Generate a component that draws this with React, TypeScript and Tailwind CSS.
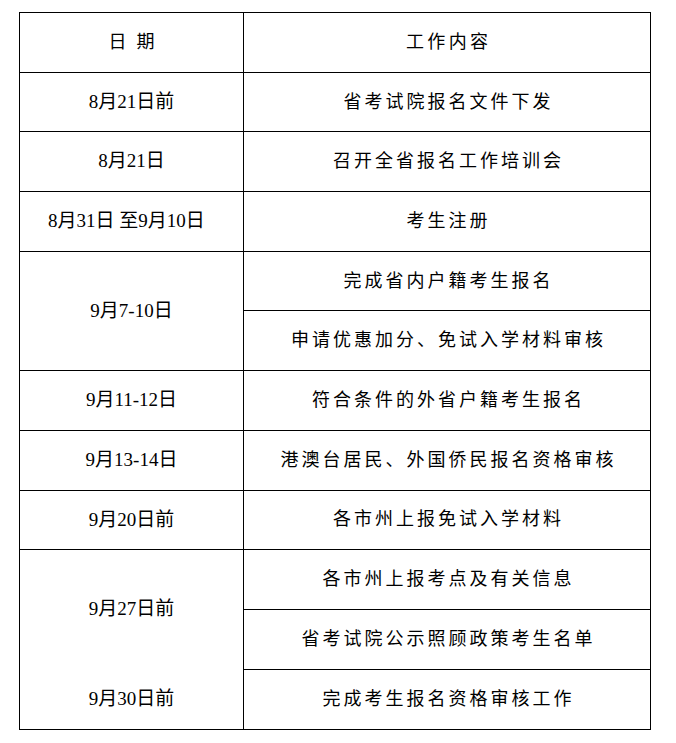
const font = { fontFamily: '"Liberation Serif", "Noto Sans CJK SC", serif' };

type Row = { date?: string; span?: number; work: string };

const rows: Row[] = [
  { date: "8月21日前", work: "省考试院报名文件下发" },
  { date: "8月21日", work: "召开全省报名工作培训会" },
  { date: "8月31日 至9月10日", work: "考生注册" },
  { date: "9月7-10日", span: 2, work: "完成省内户籍考生报名" },
  { work: "申请优惠加分、免试入学材料审核" },
  { date: "9月11-12日", work: "符合条件的外省户籍考生报名" },
  { date: "9月13-14日", work: "港澳台居民、外国侨民报名资格审核" },
  { date: "9月20日前", work: "各市州上报免试入学材料" },
];

const tail = ["各市州上报考点及有关信息", "省考试院公示照顾政策考生名单", "完成考生报名资格审核工作"];

const cell = "border border-black text-center align-middle p-0";
const dateCell = cell + " text-[19px]";
const workCell = cell + " text-[18px]";
const track = "tracking-[3px] pl-[3px]";

export default function App() {
  return (
    <div className="min-h-screen bg-white pt-[12px] pl-[19px]" style={font}>
      <table className="table-fixed border-collapse text-black">
        <colgroup>
          <col className="w-[224px]" />
          <col className="w-[407px]" />
        </colgroup>
        <tbody>
          <tr className="h-[59.7px]">
            <td className={cell + " text-[18px]"}>
              <span className="tracking-[10px] pl-[10px]">日期</span>
            </td>
            <td className={workCell}>
              <span className="tracking-[3.3px] pl-[3.3px]">工作内容</span>
            </td>
          </tr>
          {rows.map((r, i) => (
            <tr key={i} className="h-[59.7px]">
              {r.date && (
                <td className={dateCell + (i === 2 ? " pr-[10px]" : "")} rowSpan={r.span ?? 1}>
                  {r.date}
                </td>
              )}
              <td className={workCell}>
                <span className={track}>{r.work}</span>
              </td>
            </tr>
          ))}
          {tail.map((w, i) => (
            <tr key={"t" + i} className="h-[59.7px]">
              {i === 0 && (
                <td className={dateCell + " align-top"} rowSpan={3}>
                  <div className="flex flex-col">
                    <div className="h-[119px] flex items-center justify-center">9月27日前</div>
                    <div className="h-[60px] flex items-center justify-center">9月30日前</div>
                  </div>
                </td>
              )}
              <td className={workCell}>
                <span className={track}>{w}</span>
              </td>
            </tr>
          ))}
        </tbody>
      </table>
    </div>
  );
}
